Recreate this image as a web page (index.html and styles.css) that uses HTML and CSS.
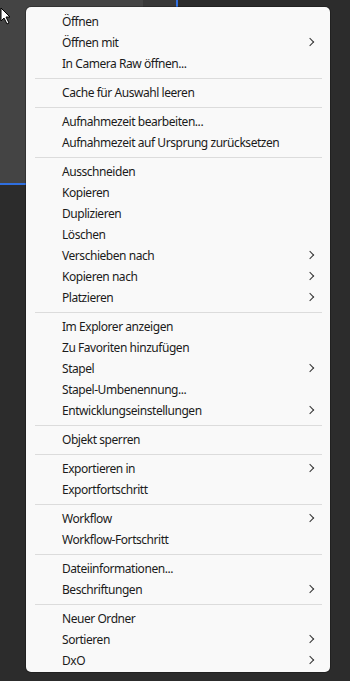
FILE: index.html
```html
<!DOCTYPE html>
<html lang="de">
<head>
<meta charset="utf-8">
<link rel="stylesheet" href="styles.css">
</head>
<body>
<div class="backdrop">
  <div class="tile"><div class="thumb"></div></div>
  <svg class="cursor" width="12" height="18" viewBox="0 0 12 18"><path d="M1 1 L1 14 L4 11 L7 17 L9 16 L6 10 L10 10 Z" fill="#fff" stroke="#000" stroke-width="1"/></svg>
</div>
<div class="menu">
  <div class="item">Öffnen</div>
  <div class="item sub">Öffnen mit</div>
  <div class="item">In Camera Raw öffnen...</div>
  <div class="sep"></div>
  <div class="item">Cache für Auswahl leeren</div>
  <div class="sep"></div>
  <div class="item">Aufnahmezeit bearbeiten...</div>
  <div class="item">Aufnahmezeit auf Ursprung zurücksetzen</div>
  <div class="sep"></div>
  <div class="item">Ausschneiden</div>
  <div class="item">Kopieren</div>
  <div class="item">Duplizieren</div>
  <div class="item">Löschen</div>
  <div class="item sub">Verschieben nach</div>
  <div class="item sub">Kopieren nach</div>
  <div class="item sub">Platzieren</div>
  <div class="sep"></div>
  <div class="item">Im Explorer anzeigen</div>
  <div class="item">Zu Favoriten hinzufügen</div>
  <div class="item sub">Stapel</div>
  <div class="item">Stapel-Umbenennung...</div>
  <div class="item sub">Entwicklungseinstellungen</div>
  <div class="sep"></div>
  <div class="item">Objekt sperren</div>
  <div class="sep"></div>
  <div class="item sub">Exportieren in</div>
  <div class="item">Exportfortschritt</div>
  <div class="sep"></div>
  <div class="item sub">Workflow</div>
  <div class="item">Workflow-Fortschritt</div>
  <div class="sep"></div>
  <div class="item">Dateiinformationen...</div>
  <div class="item sub">Beschriftungen</div>
  <div class="sep"></div>
  <div class="item">Neuer Ordner</div>
  <div class="item sub">Sortieren</div>
  <div class="item sub">DxO</div>
</div>
</body>
</html>
```
FILE: styles.css
```css
html, body {
  margin: 0;
  padding: 0;
  width: 350px;
  height: 681px;
  overflow: hidden;
  background: #2c2c2c;
  font-family: "Noto Sans", "Liberation Sans", sans-serif;
}
body {
  position: relative;
}
.backdrop {
  position: absolute;
  inset: 0;
}
.tile {
  position: absolute;
  left: 0;
  top: 0;
  width: 176px;
  height: 183px;
  background: #383838;
  border-right: 2px solid #2f6fe0;
  border-bottom: 2px solid #2f6fe0;
}
.thumb {
  width: 143px;
  height: 183px;
  background: #444444;
}
.cursor {
  position: absolute;
  left: 0;
  top: 7px;
}
.menu {
  position: absolute;
  left: 26px;
  top: 7px;
  width: 304px;
  box-sizing: border-box;
  padding: 4px 0 1px;
  background: #f9f9f9;
  border-radius: 5px;
  box-shadow: 0 0 0 1px rgba(0,0,0,0.25);
}
.item {
  position: relative;
  height: 21px;
  line-height: 21px;
  padding-left: 36px;
  font-family: "Noto Sans", "Liberation Sans", sans-serif;
  font-size: 12px;
  letter-spacing: -0.45px;
  color: #1b1b1b;
  white-space: nowrap;
}
.item.sub::after {
  content: "";
  position: absolute;
  right: 17px;
  top: 7px;
  width: 5px;
  height: 5px;
  border-right: 1.3px solid #333;
  border-top: 1.3px solid #333;
  transform: rotate(45deg);
}
.sep {
  height: 8px;
  display: flex;
  align-items: center;
  padding: 0 8px 0 9px;
}
.sep::before {
  content: "";
  flex: 1;
  height: 1px;
  background: #dcdcdc;
}
```
